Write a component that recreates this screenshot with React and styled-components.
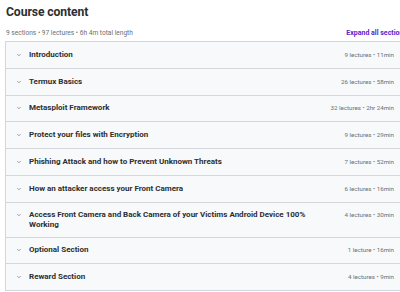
import React from "react";
import styled, { createGlobalStyle } from "styled-components";

const GlobalStyle = createGlobalStyle`
  html, body {
    margin: 0;
    padding: 0;
    background: #ffffff;
    overflow: hidden;
  }
  body {
    font-family: Roboto, "Liberation Sans", sans-serif;
    color: #2d2f31;
  }
`;

const Main = styled.div`
  width: 402px;
  padding: 4px 0 0 5px;
`;

const HeadTitle = styled.h2`
  margin: 0 0 0 1px;
  font-size: 12.2px;
  font-weight: 700;
  letter-spacing: -0.1px;
  line-height: 17px;
  color: #2d2f31;
`;

const SummaryBar = styled.div`
  display: flex;
  justify-content: space-between;
  align-items: center;
  margin-top: 4px;
  height: 16px;
  padding-left: 1px;
`;

const Summary = styled.span`
  font-size: 6.6px;
  color: #6a6f73;
`;

const ExpandBtn = styled.button`
  border: none;
  background: none;
  padding: 0;
  font-family: inherit;
  font-size: 7px;
  font-weight: 700;
  color: #5624d0;
  white-space: nowrap;
  cursor: pointer;
`;

const List = styled.div`
  border: 1px solid #d1d7dc;
  border-bottom: none;
`;

const Row = styled.div`
  display: flex;
  align-items: ${props => (props.multi ? "flex-start" : "center")};
  min-height: 26.75px;
  padding: ${props => (props.multi ? "7px 12px 7px 10px" : "0 12px 0 10px")};
  background: #f7f9fa;
  border-bottom: 1px solid #d1d7dc;
  box-sizing: border-box;
  cursor: pointer;
`;

const Chevron = styled.svg`
  width: 6px;
  height: 6px;
  flex-shrink: 0;
  margin-right: 7px;
  margin-top: ${props => (props.multi ? "2px" : "0")};
`;

const Title = styled.div`
  flex: 1;
  font-size: 8px;
  font-weight: 700;
  line-height: 10px;
  color: #2d2f31;
  padding-right: 34px;
`;

const Meta = styled.span`
  font-size: 6.2px;
  color: #6a6f73;
  white-space: nowrap;
  line-height: 10px;
`;

const sections = [
  { title: "Introduction", meta: "9 lectures • 11min" },
  { title: "Termux Basics", meta: "26 lectures • 58min" },
  { title: "Metasploit Framework", meta: "32 lectures • 2hr 24min" },
  { title: "Protect your files with Encryption", meta: "9 lectures • 29min" },
  { title: "Phishing Attack and how to Prevent Unknown Threats", meta: "7 lectures • 52min" },
  { title: "How an attacker access your Front Camera", meta: "6 lectures • 16min" },
  {
    title: "Access Front Camera and Back Camera of your Victims Android Device 100% Working",
    meta: "4 lectures • 30min",
    multi: true
  },
  { title: "Optional Section", meta: "1 lecture • 16min" },
  { title: "Reward Section", meta: "4 lectures • 9min" }
];

export default function App() {
  return (
    <Main>
      <GlobalStyle />
      <HeadTitle>Course content</HeadTitle>
      <SummaryBar>
        <Summary>9 sections • 97 lectures • 6h 4m total length</Summary>
        <ExpandBtn>Expand all sections</ExpandBtn>
      </SummaryBar>
      <List>
        {sections.map((s, id) => (
          <Row key={id} multi={s.multi}>
            <Chevron multi={s.multi} viewBox="0 0 24 24" fill="none" stroke="#6a6f73" strokeWidth="2.5" strokeLinecap="round" strokeLinejoin="round">
              <path d="M6 9l6 6 6-6" />
            </Chevron>
            <Title>{s.title}</Title>
            <Meta>{s.meta}</Meta>
          </Row>
        ))}
      </List>
    </Main>
  );
}
